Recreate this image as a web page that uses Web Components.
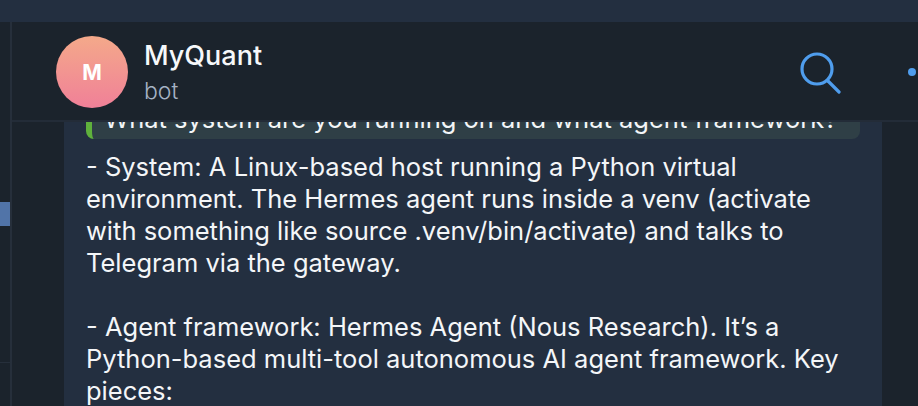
<!DOCTYPE html>
<html>
<head>
<meta charset="utf-8">
<style>
html, body { margin: 0; height: 100%; background: #1b232c; overflow: hidden; }
body { font-family: Inter, "Noto Sans", sans-serif; color: #f4f6f8; }
</style>
</head>
<body>
<chat-window>
  <chat-header slot="header" name="MyQuant" status="bot" initial="M"></chat-header>
  <chat-bubble quote="What system are you running on and what agent framework?">
    <p>- System: A Linux-based host running a Python virtual<br>environment. The Hermes agent runs inside a venv (activate<br>with something like source .venv/bin/activate) and talks to<br>Telegram via the gateway.</p>
    <p>- Agent framework: Hermes Agent (Nous Research). It’s a<br>Python-based multi-tool autonomous AI agent framework. Key<br>pieces:</p>
  </chat-bubble>
</chat-window>

<script>
class ChatWindow extends HTMLElement {
  constructor() {
    super();
    this.attachShadow({ mode: 'open' });
    this.shadowRoot.innerHTML = `
<style>
:host { display: flex; flex-direction: column; height: 406px; width: 918px; overflow: hidden; }
.top { height: 22px; flex: none; background: #232f40; }
.main { flex: 1; display: flex; min-height: 0; }
.rail { width: 10px; flex: none; background: #1b232c; display: flex; flex-direction: column; }
.rail .mark { height: 24px; margin-top: 180px; background: #5174a8; }
.rail .line { height: 1px; margin-top: 136px; background: #262f3b; }
.rule { width: 2px; flex: none; background: #262f3b; }
.pane { flex: 1; display: flex; flex-direction: column; min-width: 0; }
.sep { height: 2px; flex: none; background: #232c38; }
.body { flex: 1; display: flex; min-height: 0; overflow: hidden; }
.gutter-l { width: 52px; flex: none; }
.gutter-r { width: 36px; flex: none; }
.mid { flex: 1; min-width: 0; background: #232f40; }
</style>
<div class="top"></div>
<div class="main">
  <div class="rail"><div class="mark"></div><div class="line"></div></div>
  <div class="rule"></div>
  <div class="pane">
    <slot name="header"></slot>
    <div class="sep"></div>
    <div class="body">
      <div class="gutter-l"></div>
      <div class="mid"><slot></slot></div>
      <div class="gutter-r"></div>
    </div>
  </div>
</div>`;
  }
}
customElements.define('chat-window', ChatWindow);

class ChatHeader extends HTMLElement {
  constructor() {
    super();
    this.attachShadow({ mode: 'open' });
  }
  connectedCallback() {
    this.shadowRoot.innerHTML = `
<style>
:host { display: flex; align-items: center; height: 98px; flex: none; background: #1b232c; position: relative; }
.avatar { width: 72px; height: 72px; margin: 2px 0 0 44px; border-radius: 50%; flex: none; background: linear-gradient(#f4a98a, #f08098);
  display: flex; align-items: center; justify-content: center; color: #fff; font-weight: 700; font-size: 21px; }
.info { margin: 3px 0 0 16px; flex: 1; }
.name { font-size: 27px; font-weight: 450; line-height: 36px; color: #f6f8fa; }
.status { font-size: 23px; font-weight: 350; line-height: 32px; margin-top: 1px; color: #a5b2c4; }
.search { width: 42px; height: 42px; margin: 4px 76px 0 0; flex: none; }
.dot { position: absolute; left: 896px; top: 46px; width: 8px; height: 8px; border-radius: 50%; background: #4f9ded; }
</style>
<div class="avatar">${this.getAttribute('initial')}</div>
<div class="info">
  <div class="name">${this.getAttribute('name')}</div>
  <div class="status">${this.getAttribute('status')}</div>
</div>
<svg class="search" viewBox="0 0 42 42" fill="none" stroke="#4f9ded" stroke-width="3.2" stroke-linecap="round">
  <circle cx="17" cy="17" r="15"/><path d="M28 29 L39 40"/>
</svg>
<div class="dot"></div>`;
  }
}
customElements.define('chat-header', ChatHeader);

class ChatBubble extends HTMLElement {
  constructor() {
    super();
    this.attachShadow({ mode: 'open' });
  }
  connectedCallback() {
    this.shadowRoot.innerHTML = `
<style>
:host { display: block; padding: 0 22px; font-size: 25.5px; font-weight: 370; line-height: 32px; color: #f4f6f8; }
.quote { height: 17px; overflow: hidden; display: flex; align-items: flex-end; background: #2f3f46;
  border-left: 6px solid #5fb13c; border-radius: 0 0 8px 8px; padding-left: 12px; margin-bottom: 12px; white-space: nowrap; }
.quote span { display: block; line-height: 32px; padding-bottom: 4px; }
::slotted(p) { margin: 0 0 32px; white-space: nowrap; }
</style>
<div class="quote"><span>${this.getAttribute('quote')}</span></div>
<slot></slot>`;
  }
}
customElements.define('chat-bubble', ChatBubble);
</script>
</body>
</html>
